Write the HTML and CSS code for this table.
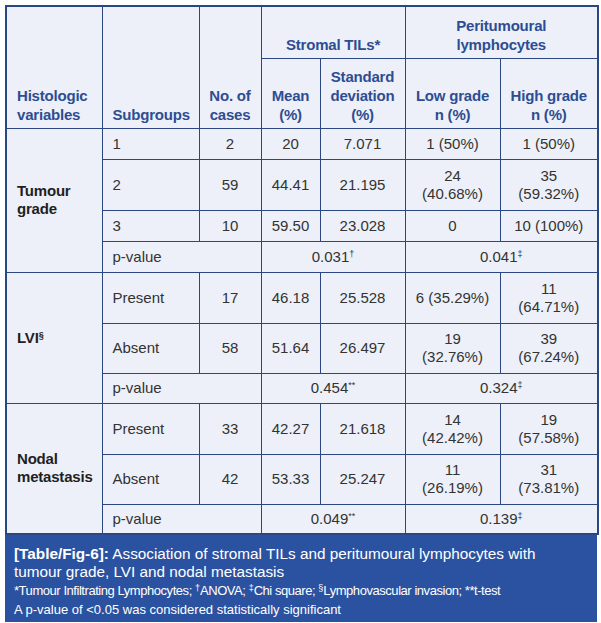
FILE: index.html
```html
<!DOCTYPE html>
<html lang="en">
<head>
<meta charset="utf-8">
<title>Table/Fig-6</title>
<link rel="stylesheet" href="styles.css">
</head>
<body>
<div class="figure">
  <table class="data">
    <colgroup>
      <col class="c-var"><col class="c-sub"><col class="c-n"><col class="c-mean"><col class="c-sd"><col class="c-low"><col class="c-high">
    </colgroup>
    <thead>
      <tr class="h-top">
        <th rowspan="2" class="left">Histologic<br>variables</th>
        <th rowspan="2" class="left">Subgroups</th>
        <th rowspan="2">No. of<br>cases</th>
        <th colspan="2">Stromal TILs*</th>
        <th colspan="2">Peritumoural<br>lymphocytes</th>
      </tr>
      <tr class="h-sub">
        <th>Mean<br>(%)</th>
        <th>Standard<br>deviation<br>(%)</th>
        <th>Low grade<br>n (%)</th>
        <th>High grade<br>n (%)</th>
      </tr>
    </thead>
    <tbody>
      <tr class="r-s">
        <td rowspan="4" class="var">Tumour<br>grade</td>
        <td class="left">1</td><td>2</td><td>20</td><td>7.071</td><td>1 (50%)</td><td>1 (50%)</td>
      </tr>
      <tr class="r-d">
        <td class="left">2</td><td>59</td><td>44.41</td><td>21.195</td><td>24<br>(40.68%)</td><td>35<br>(59.32%)</td>
      </tr>
      <tr class="r-s">
        <td class="left">3</td><td>10</td><td>59.50</td><td>23.028</td><td>0</td><td>10 (100%)</td>
      </tr>
      <tr class="r-s">
        <td colspan="2" class="left">p-value</td><td colspan="2">0.031<sup>†</sup></td><td colspan="2">0.041<sup>‡</sup></td>
      </tr>

      <tr class="r-d">
        <td rowspan="3" class="var">LVI<sup>§</sup></td>
        <td class="left">Present</td><td>17</td><td>46.18</td><td>25.528</td><td>6 (35.29%)</td><td>11<br>(64.71%)</td>
      </tr>
      <tr class="r-d2">
        <td class="left">Absent</td><td>58</td><td>51.64</td><td>26.497</td><td>19<br>(32.76%)</td><td>39<br>(67.24%)</td>
      </tr>
      <tr class="r-p">
        <td colspan="2" class="left">p-value</td><td colspan="2">0.454<sup>**</sup></td><td colspan="2">0.324<sup>‡</sup></td>
      </tr>

      <tr class="r-d">
        <td rowspan="3" class="var">Nodal<br>metastasis</td>
        <td class="left">Present</td><td>33</td><td>42.27</td><td>21.618</td><td>14<br>(42.42%)</td><td>19<br>(57.58%)</td>
      </tr>
      <tr class="r-d2">
        <td class="left">Absent</td><td>42</td><td>53.33</td><td>25.247</td><td>11<br>(26.19%)</td><td>31<br>(73.81%)</td>
      </tr>
      <tr class="r-p">
        <td colspan="2" class="left">p-value</td><td colspan="2">0.049<sup>**</sup></td><td colspan="2">0.139<sup>‡</sup></td>
      </tr>
    </tbody>
  </table>
  <div class="caption">
    <p class="title"><b>[Table/Fig-6]:</b> Association of stromal TILs and peritumoural lymphocytes with<br>tumour grade, LVI and nodal metastasis</p>
    <p class="note tight">*Tumour Infiltrating Lymphocytes; <sup>†</sup>ANOVA; <sup>‡</sup>Chi square; <sup>§</sup>Lymphovascular invasion; **t-test</p>
    <p class="note">A p-value of &lt;0.05 was considered statistically significant</p>
  </div>
</div>
</body>
</html>
```

FILE: styles.css
```css
html, body {
  margin: 0;
  padding: 0;
  background: #ffffff;
}

body {
  font-family: "Liberation Sans", Arial, sans-serif;
}

.figure {
  width: 592px;
  margin: 5px 0 0 5px;
}

.data {
  width: 592px;
  table-layout: fixed;
  border-collapse: collapse;
  background: #edf0f8;
  border: 2px solid #2b4781;
}

.c-var { width: 96px; }
.c-sub { width: 97px; }
.c-n { width: 62px; }
.c-mean { width: 59px; }
.c-sd { width: 85px; }
.c-low { width: 95px; }
.c-high { width: 98px; }

.data th,
.data td {
  border: 1px solid #2b4781;
  padding: 0 3px;
  text-align: center;
}

.data th {
  font-size: 15px;
  line-height: 19px;
  font-weight: bold;
  color: #2d4d93;
  vertical-align: bottom;
  padding-bottom: 4px;
  letter-spacing: -0.2px;
}

.data td {
  font-size: 15px;
  line-height: 18px;
  color: #333333;
  vertical-align: middle;
}

.data .left {
  text-align: left;
  padding-left: 10px;
}

.data .var {
  text-align: left;
  padding-left: 10px;
  font-weight: bold;
  color: #1f1f1f;
  letter-spacing: -0.2px;
}

.h-top { height: 52px; }
.h-sub { height: 70px; }
.r-s { height: 31px; }
.r-d { height: 51px; }
.r-d2 { height: 50px; }
.r-p { height: 30px; }

.data sup {
  font-size: 9px;
  line-height: 0;
  vertical-align: 5px;
}

.caption {
  background: #2b52a0;
  color: #ffffff;
  padding: 10px 9px 8px 9px;
  height: 87px;
  box-sizing: border-box;
}

.caption p {
  margin: 0;
}

.title {
  font-size: 15.3px;
  line-height: 18px;
}

.note {
  font-size: 13px;
  line-height: 19px;
}

.note.tight {
  letter-spacing: -0.45px;
}

.note sup {
  font-size: 9px;
  line-height: 0;
  vertical-align: 4px;
  letter-spacing: 0;
}
```
